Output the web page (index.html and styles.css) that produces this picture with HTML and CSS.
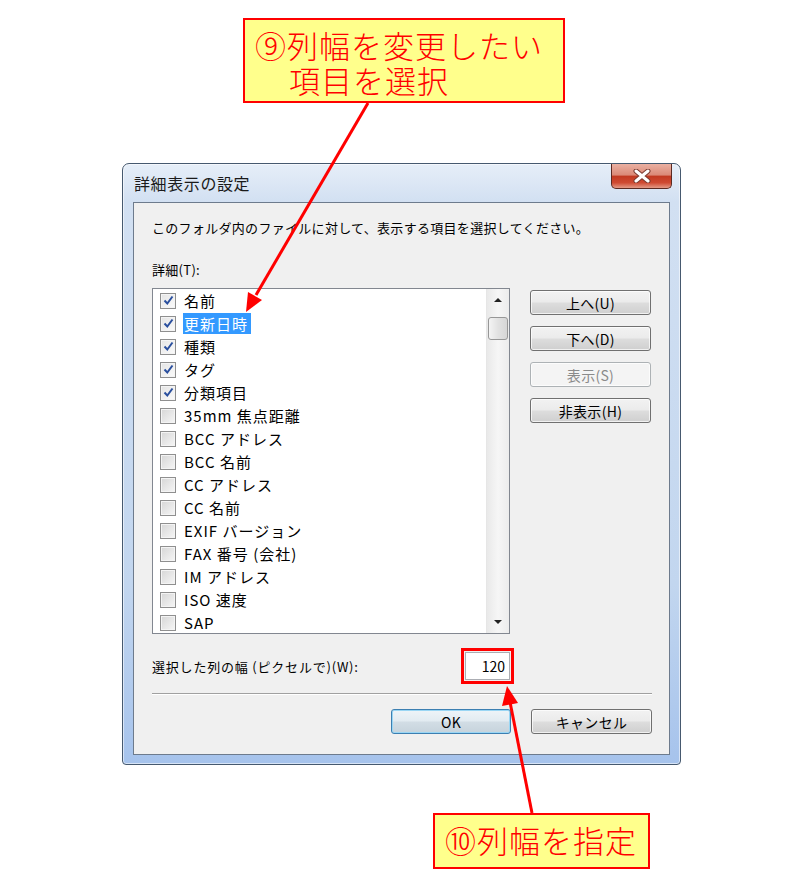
FILE: index.html
```html
<!DOCTYPE html>
<html lang="ja">
<head>
    <meta charset="UTF-8">
    <title>詳細表示の設定</title>
    <link rel="stylesheet" href="styles.css">
</head>
<body>
    <div class="page">
        <div class="callout callout-top">
            <div class="line">⑨列幅を変更したい</div>
            <div class="line indent">項目を選択</div>
        </div>

        <div class="window">
            <div class="titlebar">
                <span class="title">詳細表示の設定</span>
                <button type="button" class="close">
                    <svg width="22" height="14" viewBox="0 0 22 14">
                        <path d="M5 2 L17 12 M17 2 L5 12" stroke="#7a3a30" stroke-width="5" stroke-linecap="round"/>
                        <path d="M5 2 L17 12 M17 2 L5 12" stroke="#fff" stroke-width="3" stroke-linecap="round"/>
                    </svg>
                </button>
            </div>

            <div class="panel">
                <p class="desc">このフォルダ内のファイルに対して、表示する項目を選択してください。</p>
                <p class="label">詳細(T):</p>

                <div class="main">
                    <div class="listbox">
                        <ul class="items">
                            <li><span class="box on"><svg width="11" height="11" viewBox="0 0 11 11"><path d="M1.5 5.5 L4.3 8.5 L9.5 1.5" fill="none" stroke="#2a4f9e" stroke-width="2"/></svg></span>名前</li>
                            <li><span class="box on"><svg width="11" height="11" viewBox="0 0 11 11"><path d="M1.5 5.5 L4.3 8.5 L9.5 1.5" fill="none" stroke="#2a4f9e" stroke-width="2"/></svg></span><span class="selected">更新日時</span></li>
                            <li><span class="box on"><svg width="11" height="11" viewBox="0 0 11 11"><path d="M1.5 5.5 L4.3 8.5 L9.5 1.5" fill="none" stroke="#2a4f9e" stroke-width="2"/></svg></span>種類</li>
                            <li><span class="box on"><svg width="11" height="11" viewBox="0 0 11 11"><path d="M1.5 5.5 L4.3 8.5 L9.5 1.5" fill="none" stroke="#2a4f9e" stroke-width="2"/></svg></span>タグ</li>
                            <li><span class="box on"><svg width="11" height="11" viewBox="0 0 11 11"><path d="M1.5 5.5 L4.3 8.5 L9.5 1.5" fill="none" stroke="#2a4f9e" stroke-width="2"/></svg></span>分類項目</li>
                            <li><span class="box"></span>35mm 焦点距離</li>
                            <li><span class="box"></span>BCC アドレス</li>
                            <li><span class="box"></span>BCC 名前</li>
                            <li><span class="box"></span>CC アドレス</li>
                            <li><span class="box"></span>CC 名前</li>
                            <li><span class="box"></span>EXIF バージョン</li>
                            <li><span class="box"></span>FAX 番号 (会社)</li>
                            <li><span class="box"></span>IM アドレス</li>
                            <li><span class="box"></span>ISO 速度</li>
                            <li><span class="box"></span>SAP</li>
                        </ul>
                        <div class="scrollbar">
                            <span class="sb-btn"><span class="tri up"></span></span>
                            <span class="thumb"></span>
                            <span class="track"></span>
                            <span class="sb-btn"><span class="tri down"></span></span>
                        </div>
                    </div>

                    <div class="side">
                        <button type="button" class="btn">上へ(U)</button>
                        <button type="button" class="btn">下へ(D)</button>
                        <button type="button" class="btn" disabled>表示(S)</button>
                        <button type="button" class="btn">非表示(H)</button>
                    </div>
                </div>

                <div class="width-row">
                    <span class="width-label">選択した列の幅 (ピクセルで)(W):</span>
                    <span class="mark"><span class="field">120</span></span>
                </div>

                <div class="sep"></div>

                <div class="actions">
                    <button type="button" class="btn default">OK</button>
                    <button type="button" class="btn">キャンセル</button>
                </div>
            </div>
        </div>

        <div class="callout callout-bottom">⑩列幅を指定</div>

        <svg class="arrows" width="800" height="888" viewBox="0 0 800 888">
            <line x1="368" y1="103" x2="256" y2="295" stroke="#f00" stroke-width="3"/>
            <polygon points="246,312 262,300 248,292" fill="#f00"/>
            <line x1="532" y1="813" x2="510" y2="702" stroke="#f00" stroke-width="3"/>
            <polygon points="507,686 518,703 502,706" fill="#f00"/>
        </svg>
    </div>
</body>
</html>
```

FILE: styles.css
```css
* {
    box-sizing: border-box;
}
body {
    margin: 0;
    background-color: #fff;
    font-family: "Noto Sans CJK JP", "Noto Sans", sans-serif;
    color: #000;
}
.page {
    position: relative;
    width: 800px;
    height: 888px;
    overflow: hidden;
    padding-top: 18px;
}
.callout {
    border: 2px solid #f00;
    background-color: #ffff8c;
    color: #f00;
    font-size: 31px;
    font-weight: 300;
    line-height: 35px;
}
.callout-top {
    width: 322px;
    height: 85px;
    margin-left: 243px;
    padding: 7px 0 0 10px;
}
.callout-top .line {
    height: 35px;
    letter-spacing: 1px;
}
.callout-top .indent {
    padding-left: 34px;
}
.callout-bottom {
    width: 217px;
    height: 56px;
    margin: 48px 0 0 433px;
    padding: 7px 0 0 10px;
    letter-spacing: 1px;
}

/* window frame */
.window {
    width: 559px;
    height: 602px;
    margin: 60px 0 0 122px;
    border: 1px solid #46596f;
    border-radius: 7px 7px 4px 4px;
    background: linear-gradient(180deg, #e6eef8 0%, #d2e0f2 38px, #c2d6ef 70%, #a6c3ec 100%);
    box-shadow: inset 0 0 0 1px rgba(255,255,255,0.55);
    display: flex;
    flex-direction: column;
}
.titlebar {
    height: 38px;
    display: flex;
    justify-content: space-between;
    align-items: center;
    padding: 0 8px 0 11px;
}
.title {
    font-size: 16px;
    letter-spacing: 0.6px;
    color: #1a1a1a;
}
.close {
    align-self: flex-start;
    width: 61px;
    height: 25px;
    padding: 0;
    border: 1px solid #5c2a22;
    border-top: none;
    border-radius: 0 0 5px 5px;
    background: linear-gradient(180deg, #eab0a2 0%, #db8a78 45%, #c23a22 52%, #cf4a32 78%, #e49a86 100%);
    display: flex;
    align-items: center;
    justify-content: center;
}
.panel {
    height: 553px;
    margin: 0 10px;
    border: 1px solid #6d7b8d;
    background-color: #f0f0f0;
    padding: 16px 18px 0 18px;
    font-size: 13px;
}
.desc, .label {
    margin: 0;
    line-height: 18px;
    letter-spacing: 0.3px;
}
.label {
    margin-top: 24px;
}

/* list and side buttons */
.main {
    display: flex;
    gap: 20px;
    margin-top: 9px;
}
.listbox {
    width: 359px;
    height: 346px;
    border: 1px solid #828790;
    background-color: #fff;
    display: flex;
}
.items {
    list-style: none;
    margin: 0;
    padding: 0;
    flex: 1;
    font-size: 15px;
    letter-spacing: 1px;
}
.items li {
    height: 23px;
    display: flex;
    align-items: center;
    padding-left: 7px;
    white-space: nowrap;
}
.box {
    width: 16px;
    height: 16px;
    margin-right: 8px;
    border: 1px solid #8f8f8f;
    background: linear-gradient(135deg, #d6d6d6, #f6f6f6);
    box-shadow: inset 0 0 0 1px #f4f4f4;
    display: flex;
    align-items: center;
    justify-content: center;
}
.box.on {
    background: linear-gradient(135deg, #e4e4e4, #fbfbfb);
}
.selected {
    background-color: #3399ff;
    color: #fff;
    line-height: 21px;
    padding: 0 3px 0 1px;
    margin-left: -1px;
}
.scrollbar {
    width: 23px;
    border-left: 1px solid #e6e6e6;
    background: linear-gradient(90deg, #e9e9e9, #f6f6f6 50%, #ececec);
    display: flex;
    flex-direction: column;
}
.sb-btn {
    height: 22px;
    display: flex;
    align-items: center;
    justify-content: center;
}
.tri {
    width: 0;
    height: 0;
    border-left: 4px solid transparent;
    border-right: 4px solid transparent;
}
.tri.up {
    border-bottom: 4px solid #222;
}
.tri.down {
    border-top: 4px solid #222;
}
.thumb {
    height: 23px;
    margin: 6px 1px 0 1px;
    border: 1px solid #979797;
    border-radius: 3px;
    background: linear-gradient(90deg, #f4f4f4, #e2e2e2 50%, #d6d6d6);
}
.track {
    flex: 1;
}
.side {
    width: 121px;
    display: flex;
    flex-direction: column;
    gap: 11px;
    padding-top: 2px;
}
.btn {
    height: 25px;
    width: 121px;
    border: 1px solid #707070;
    border-radius: 3px;
    background: linear-gradient(180deg, #f2f2f2 0%, #ebebeb 48%, #dddddd 52%, #cfcfcf 100%);
    box-shadow: inset 0 0 0 1px rgba(255,255,255,0.7);
    font-family: inherit;
    font-size: 14px;
    letter-spacing: 0.3px;
    color: #000;
    padding: 0;
}
.btn:disabled {
    border-color: #adb2b5;
    background: #f4f4f4;
    color: #8a8a8a;
}
.btn.default {
    width: 120px;
    border-color: #3c7fb1;
    background: linear-gradient(180deg, #eef4f8 0%, #e2ebf1 48%, #d2dde5 52%, #c6d3dc 100%);
    box-shadow: inset 0 0 0 1px #9ad6f4;
}

/* width field */
.width-row {
    width: 362px;
    margin-top: 14px;
    display: flex;
    justify-content: space-between;
    align-items: center;
}
.width-label {
    letter-spacing: 0.8px;
}
.mark {
    border: 3px solid #f00;
    padding: 1px;
}
.field {
    display: block;
    width: 45px;
    height: 28px;
    border: 1px solid #abadb3;
    background-color: #fff;
    text-align: right;
    padding-right: 4px;
    line-height: 26px;
    font-size: 14px;
}
.sep {
    margin-top: 9px;
    width: 500px;
    border-top: 1px solid #a0a0a0;
    border-bottom: 1px solid #fff;
}
.actions {
    margin-top: 14px;
    display: flex;
    justify-content: flex-end;
    gap: 20px;
    width: 500px;
}

.arrows {
    position: absolute;
    top: 0;
    left: 0;
    pointer-events: none;
}
```
